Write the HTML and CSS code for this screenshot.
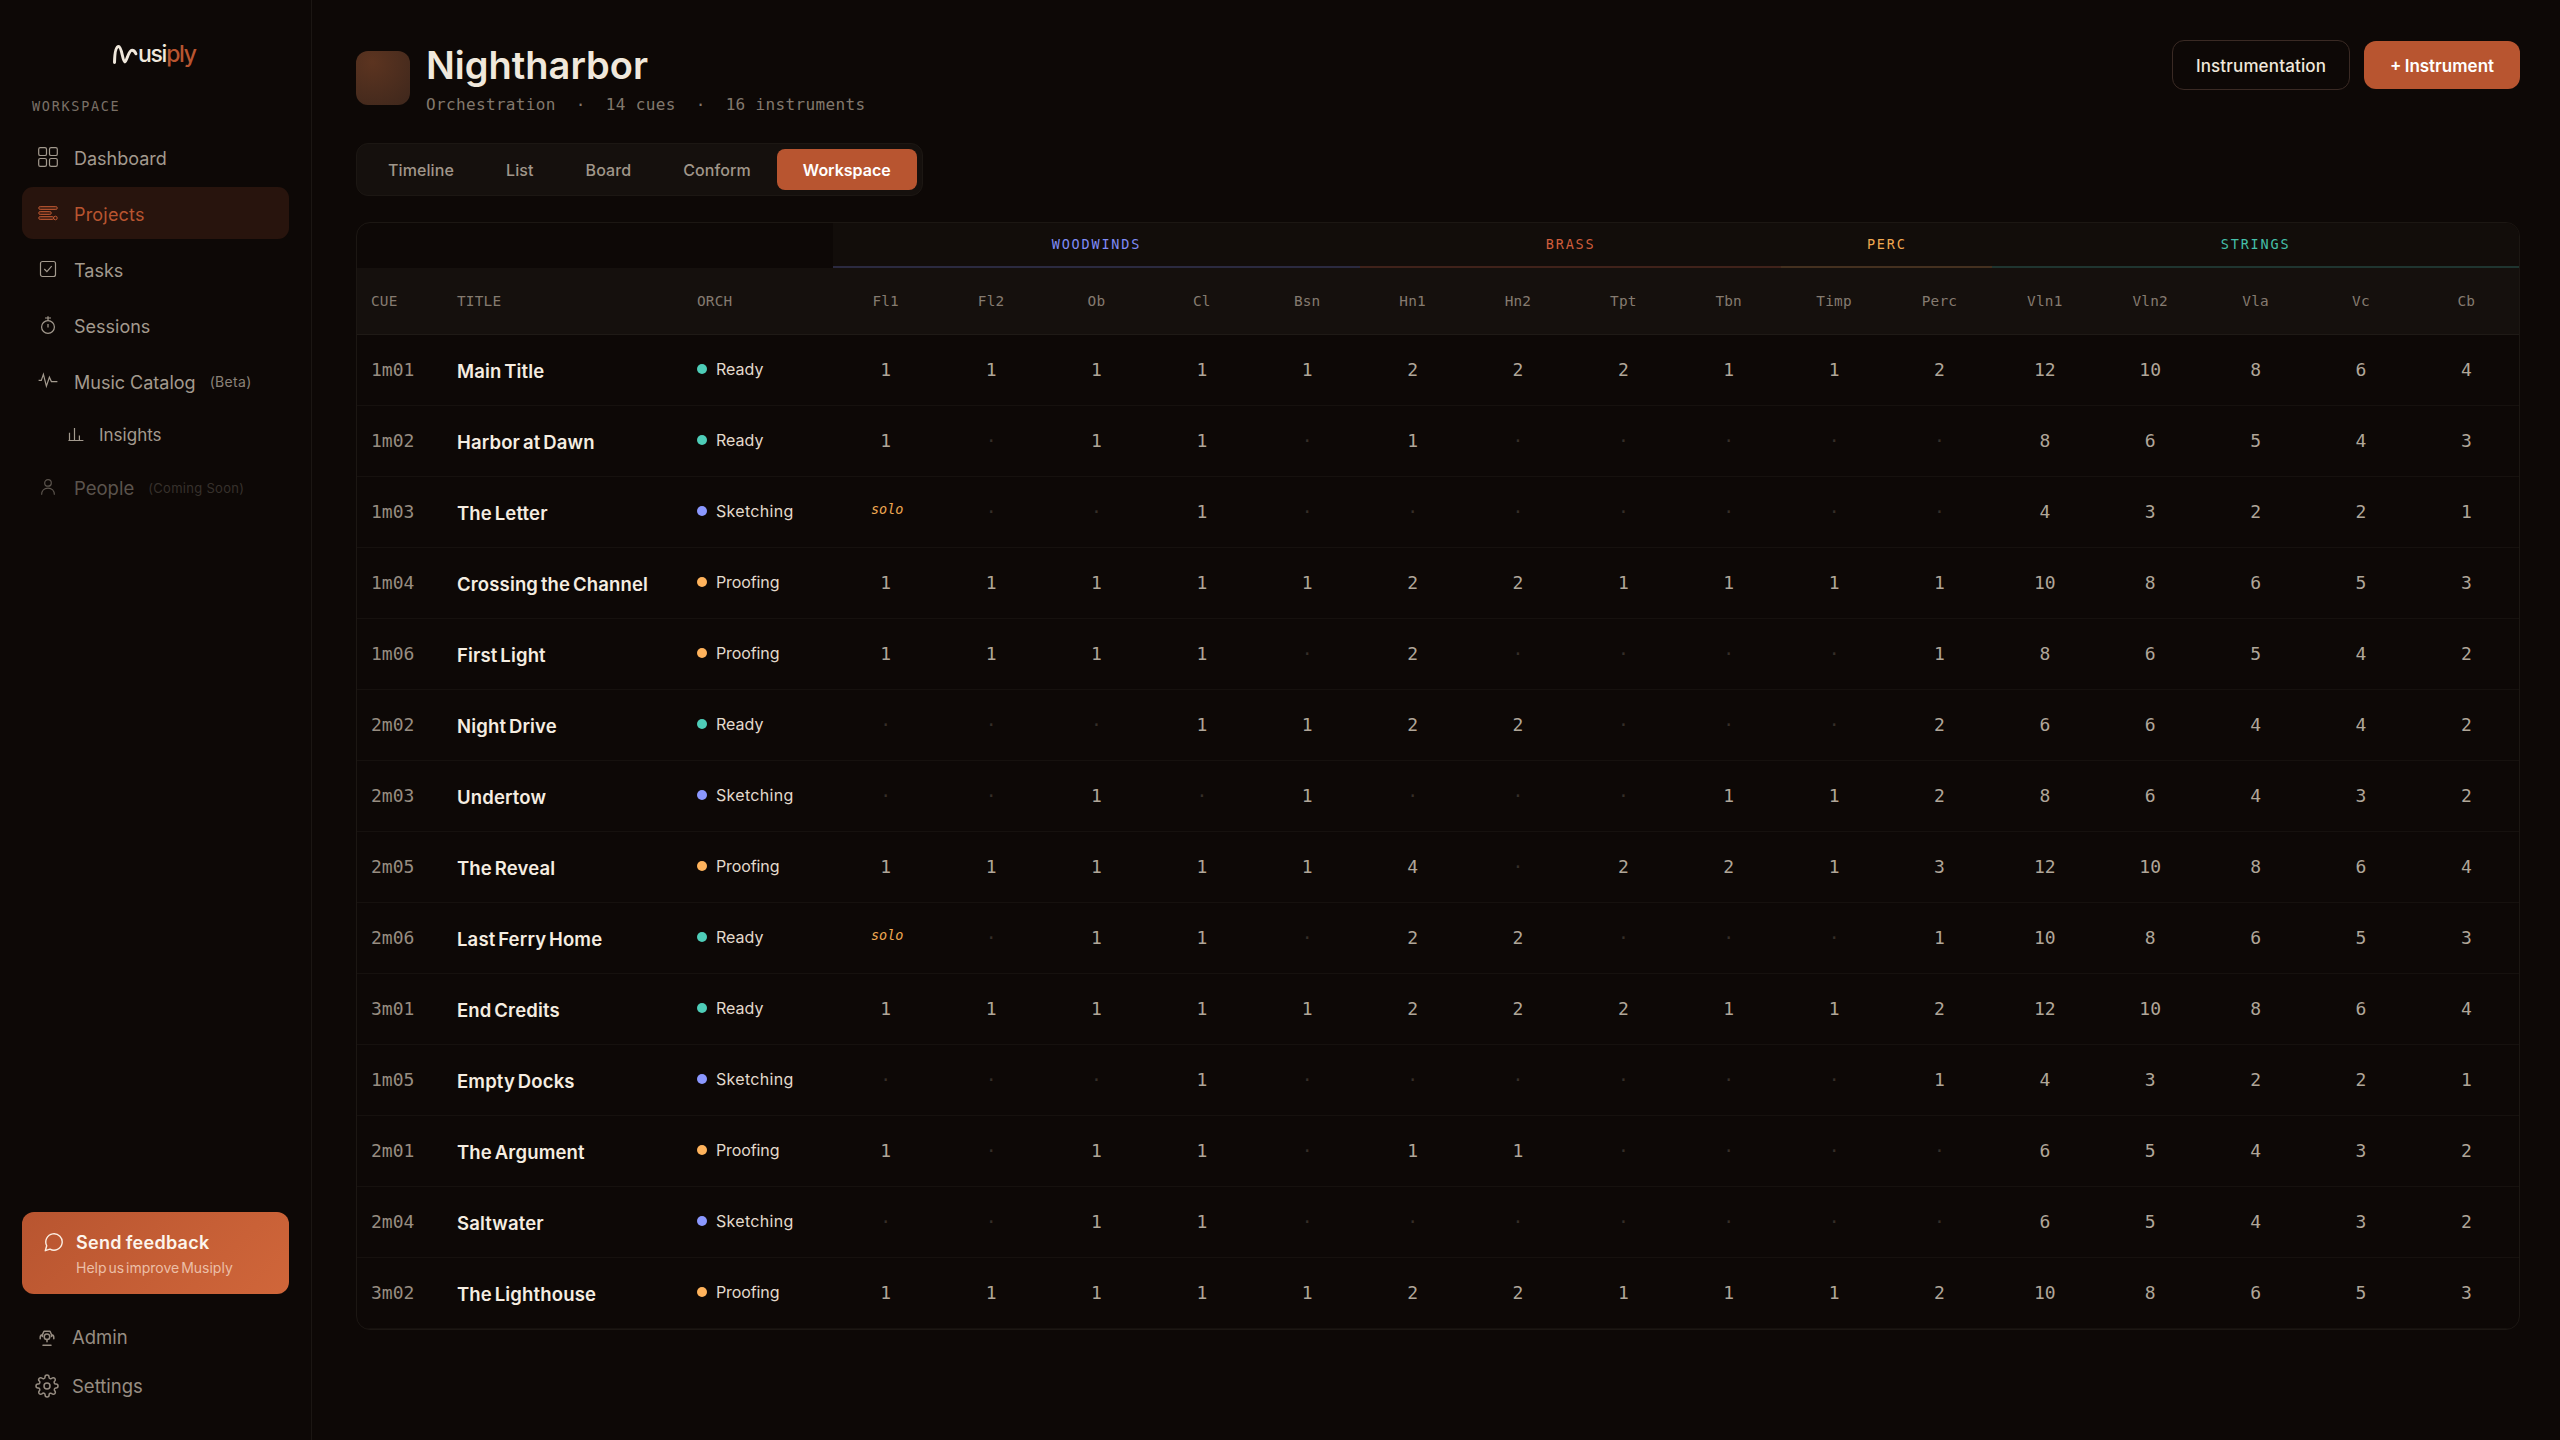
FILE: index.html
```html
<!DOCTYPE html>
<html lang="en">
<head>
    <meta charset="utf-8">
    <title>Nightharbor - Musiply</title>
    <link rel="stylesheet" href="styles.css">
</head>
<body>
    <div class="app">
        <aside class="sidebar">
            <div class="logo">
                <svg class="logo-mark" viewBox="0 0 26 22"><path d="M2.5 19.4C2.7 11 3.6 3.6 6.6 3.6C9.8 3.6 10.6 18.4 12.8 18.9C14.8 18.2 16.6 7.3 20 7.3C22 7.3 23 8.6 23.9 10.8"/></svg>
                <span class="logo-text">usi<em>ply</em></span>
            </div>
            <div class="section-label">WORKSPACE</div>
            <nav class="nav">
                <a class="nav-item">
                    <svg class="icon" viewBox="0 0 20 20"><rect x=".7" y=".7" width="7.8" height="7.8" rx="1.6"/><rect x="11.5" y=".7" width="7.8" height="7.8" rx="1.6"/><rect x=".7" y="11.5" width="7.8" height="7.8" rx="1.6"/><rect x="11.5" y="11.5" width="7.8" height="7.8" rx="1.6"/></svg>
                    <span>Dashboard</span>
                </a>
                <a class="nav-item active">
                    <svg class="icon bars" viewBox="0 0 20 20"><rect x=".7" y="3.5" width="18.6" height="3" rx="1.5"/><rect x=".7" y="8.5" width="12.6" height="3" rx="1.5"/><rect x=".7" y="13.5" width="15" height="3" rx="1.5"/><circle cx="17.4" cy="15" r="1.8"/></svg>
                    <span>Projects</span>
                </a>
                <a class="nav-item">
                    <svg class="icon" viewBox="0 0 20 20"><rect x="2.5" y="2.5" width="15" height="15" rx="2"/><path d="M6.3 10l2.6 2.6 4.8-5.4"/></svg>
                    <span>Tasks</span>
                </a>
                <a class="nav-item">
                    <svg class="icon" viewBox="0 0 20 20"><circle cx="10" cy="12" r="6.4"/><path d="M10 1.2v4.2M7 3h6M10 9v3.6"/></svg>
                    <span>Sessions</span>
                </a>
                <a class="nav-item">
                    <svg class="icon" viewBox="0 0 20 20"><path d="M.6 9.4h2.7L5.4 3.3l3 11.9 3-9L13.4 10.6h6"/></svg>
                    <span>Music Catalog</span>
                    <small class="tag">(Beta)</small>
                </a>
                <a class="nav-item sub">
                    <svg class="icon" viewBox="0 0 16 16"><path d="M.4 13.5h15M1.5 13.5V5.8M6.5 13.5V1M11.4 13.5V8.4"/></svg>
                    <span>Insights</span>
                </a>
                <a class="nav-item disabled">
                    <svg class="icon" viewBox="0 0 20 20"><circle cx="10" cy="4.9" r="3.3"/><path d="M3.6 16.7c0-4 2.6-6.6 6.4-6.6s6.4 2.6 6.4 6.6"/></svg>
                    <span>People</span>
                    <small class="tag">(Coming Soon)</small>
                </a>
            </nav>

            <div class="sidebar-bottom">
                <div class="feedback">
                    <svg class="feedback-icon" viewBox="0 0 20 20"><path d="M1.3 18.7l1.4-4.9A8.2 8.2 0 1 1 6 17.2z"/></svg>
                    <div>
                        <div class="feedback-title">Send feedback</div>
                        <div class="feedback-sub">Help us improve Musiply</div>
                    </div>
                </div>
                <a class="foot-item">
                    <svg class="foot-icon" viewBox="0 0 24 24"><circle cx="12" cy="11.7" r="2.8"/><path d="M5.2 13.8v-1.4c0-1.5.9-2.4 2.2-2.6L9 6.2h6l1.6 3.6c1.3.2 2.2 1.1 2.2 2.6v1.4M7.4 9.8v1.6M16.6 9.8v1.6M12 14.5v2.3M8 20.2h8"/></svg>
                    <span>Admin</span>
                </a>
                <a class="foot-item">
                    <svg class="foot-icon" viewBox="0 0 24 24"><circle cx="12" cy="12" r="3"/><path d="M19.4 15a1.65 1.65 0 0 0 .33 1.82l.06.06a2 2 0 1 1-2.83 2.83l-.06-.06a1.65 1.65 0 0 0-2.8 1.17V21a2 2 0 0 1-4 0v-.18a1.65 1.65 0 0 0-2.9-1.17l-.06.06a2 2 0 1 1-2.83-2.83l.06-.06A1.65 1.65 0 0 0 3.2 14H3a2 2 0 0 1 0-4h.2a1.65 1.65 0 0 0 1.15-2.88l-.06-.06a2 2 0 1 1 2.83-2.83l.06.06A1.65 1.65 0 0 0 10 3.15V3a2 2 0 0 1 4 0v.15a1.65 1.65 0 0 0 2.82 1.14l.06-.06a2 2 0 1 1 2.83 2.83l-.06.06A1.65 1.65 0 0 0 20.8 10H21a2 2 0 0 1 0 4h-.2a1.65 1.65 0 0 0-1.4 1z"/></svg>
                    <span>Settings</span>
                </a>
            </div>
        </aside>

        <main class="main">
            <header class="header">
                <div class="cover"></div>
                <div class="heading">
                    <h1>Nightharbor</h1>
                    <div class="meta"><span>Orchestration</span><span>·</span><span>14 cues</span><span>·</span><span>16 instruments</span></div>
                </div>
                <div class="actions">
                    <button class="btn btn-outline">Instrumentation</button>
                    <button class="btn btn-primary">+ Instrument</button>
                </div>
            </header>

            <div class="tabs">
                <a class="tab">Timeline</a>
                <a class="tab">List</a>
                <a class="tab">Board</a>
                <a class="tab">Conform</a>
                <a class="tab active">Workspace</a>
            </div>

            <div class="grid">
                <table>
                    <colgroup>
                        <col class="col-cue"><col class="col-title"><col class="col-orch"><col span="16">
                    </colgroup>
                    <thead>
                        <tr class="groups">
                            <th colspan="3"></th>
                            <th colspan="5" class="woodwinds">WOODWINDS</th>
                            <th colspan="4" class="brass">BRASS</th>
                            <th colspan="2" class="perc">PERC</th>
                            <th colspan="5" class="strings">STRINGS</th>
                        </tr>
                        <tr class="columns" id="columns">
                            <th class="left">CUE</th>
                            <th class="left">TITLE</th>
                            <th class="left orch">ORCH</th>
                        </tr>
                    </thead>
                    <tbody id="cues"></tbody>
                </table>
            </div>
        </main>
    </div>
    <script src="script.js"></script>
</body>
</html>
```
FILE: styles.css
```css
* {
    box-sizing: border-box;
}

body {
    margin: 0;
    background-color: #0d0806;
    color: #f0e8dc;
    font-family: Inter, "Open Sans", sans-serif;
}

.app {
    display: flex;
    height: 1440px;
}

/* Sidebar */
.sidebar {
    width: 312px;
    padding: 0 22px 30px;
    border-right: 1px solid #1b1613;
    display: flex;
    flex-direction: column;
}

.logo {
    display: flex;
    height: 28px;
    margin: 40px 0 0 90px;
    align-items: center;
}

.logo-mark {
    width: 26px;
    height: 22px;
    fill: none;
    stroke: #f0e8dc;
    stroke-width: 3;
    stroke-linecap: round;
    stroke-linejoin: round;
}

.logo-text {
    font-size: 23px;
    font-weight: 500;
    letter-spacing: -1.3px;
}

.logo-text em {
    font-style: normal;
    color: #b85530;
}

.section-label {
    margin: 28px 0 0 10px;
    height: 20px;
    line-height: 20px;
    font-family: "DejaVu Sans Mono", monospace;
    font-size: 13.5px;
    letter-spacing: 1.7px;
    color: #7a7066;
}

.nav {
    display: flex;
    flex-direction: column;
    gap: 4px;
    margin-top: 15px;
}

.nav-item {
    display: flex;
    align-items: center;
    height: 52px;
    padding-left: 16px;
    border-radius: 11px;
    font-size: 18px;
    color: #a39a8e;
}

.nav-item span {
    padding-top: 2px;
}

.nav-item.active {
    background-color: #28140d;
    letter-spacing: 0.2px;
    color: #b85530;
}

.nav-item.sub {
    height: 48px;
    padding-left: 46px;
    font-size: 17px;
}

.nav-item.sub span {
    padding-top: 0;
}

.nav-item.disabled {
    margin-top: -1px;
    font-size: 18.5px;
    color: #5b544d;
}

.nav-item.disabled span {
    padding-top: 0;
}

.icon {
    width: 20px;
    height: 20px;
    margin-right: 16px;
    fill: none;
    stroke: currentColor;
    stroke-width: 1.2;
}

.sub .icon {
    width: 16px;
    height: 16px;
    margin-right: 15px;
}

.bars rect {
    fill: rgba(184, 85, 48, 0.3);
    stroke-width: 0.9;
}

.bars circle {
    stroke-width: 1;
}

.tag {
    margin-left: 14px;
    font-size: 14px;
    letter-spacing: 0.35px;
    color: #8b8278;
}

.disabled .tag {
    font-size: 13px;
    letter-spacing: 0.3px;
    color: #37312c;
}

.sidebar-bottom {
    margin-top: auto;
}

.feedback {
    display: flex;
    height: 82px;
    margin-bottom: 18px;
    padding: 18px 0 0 22px;
    border-radius: 12px;
    background: linear-gradient(135deg, #b85530, #d0663a);
}

.feedback-icon {
    width: 20px;
    height: 20px;
    margin: 2px 12px 0 0;
    fill: none;
    stroke: #fbeee2;
    stroke-width: 1.4;
    stroke-linejoin: round;
}

.feedback-title {
    font-size: 18px;
    font-weight: 600;
    line-height: 26px;
    letter-spacing: 0.3px;
    word-spacing: -1px;
    color: #fdf5ec;
}

.feedback-sub {
    font-size: 14px;
    line-height: 23px;
    word-spacing: -2px;
    color: #ecbfa7;
}

.foot-item {
    display: flex;
    align-items: center;
    height: 49px;
    padding-left: 13px;
    font-size: 18.5px;
    color: #978d82;
}

.foot-icon {
    width: 24px;
    height: 24px;
    margin-right: 13px;
    fill: none;
    stroke: currentColor;
    stroke-width: 1.5;
    stroke-linecap: round;
    stroke-linejoin: round;
}

/* Project header */
.main {
    flex: 1;
    padding: 40px 40px 0 44px;
}

.header {
    display: flex;
    height: 103px;
}

.cover {
    width: 54px;
    height: 54px;
    margin: 11px 16px 0 0;
    border-radius: 12px;
    background: radial-gradient(circle at 30% 20%, #5c3420, #3e271c);
}

h1 {
    margin: 0;
    height: 50px;
    font-size: 38px;
    font-weight: 600;
    line-height: 50px;
}

.meta {
    display: flex;
    gap: 20px;
    margin-top: 5px;
    font-family: "DejaVu Sans Mono", monospace;
    font-size: 16px;
    line-height: 20px;
    letter-spacing: 0.35px;
    color: #82786d;
}

.actions {
    display: flex;
    gap: 14px;
    margin-left: auto;
}

.btn {
    height: 50px;
    padding: 2px 0 0;
    border-radius: 12px;
    font-family: inherit;
    font-size: 17px;
    font-weight: 500;
}

.btn-outline {
    width: 178px;
    background: none;
    border: 1px solid #3a2a24;
    letter-spacing: 0.15px;
    color: #f0e8dc;
}

.btn-primary {
    width: 156px;
    height: 48px;
    margin-top: 1px;
    background-color: #b85530;
    border: none;
    font-weight: 600;
    word-spacing: -1px;
    color: #fff;
}

.tabs {
    display: inline-flex;
    height: 53px;
    padding: 5px;
    border: 1px solid #1c1713;
    border-radius: 12px;
    background-color: #15100d;
}

.tab {
    padding: 0 26px;
    border-radius: 8px;
    font-size: 16px;
    font-weight: 500;
    line-height: 42px;
    letter-spacing: 0.1px;
    color: #a0968a;
}

.tab.active {
    background-color: #b85530;
    font-weight: 600;
    letter-spacing: 0;
    color: #fff;
}

/* Instrument grid */
.grid {
    margin-top: 26px;
    border: 1px solid #1c1713;
    border-radius: 14px;
    overflow: hidden;
}

table {
    width: 100%;
    table-layout: fixed;
    border-collapse: separate;
    border-spacing: 0;
}

.col-cue {
    width: 86px;
}

.col-title {
    width: 239px;
}

.col-orch {
    width: 151px;
}

th, td {
    padding: 0;
    text-align: center;
    font-family: "DejaVu Sans Mono", monospace;
}

.groups th {
    height: 45px;
    padding-bottom: 1px;
    font-size: 13.5px;
    font-weight: 400;
    letter-spacing: 1.8px;
}

.groups .woodwinds,
.groups .brass,
.groups .perc,
.groups .strings {
    background-color: #120d0a;
    border-bottom: 2px solid;
}

.groups .woodwinds {
    color: #7f8bf5;
    border-color: #2b2a40;
}

.groups .brass {
    color: #d05d3c;
    border-color: #40221a;
}

.groups .perc {
    color: #f0a850;
    border-color: #44301f;
}

.groups .strings {
    color: #45bfa8;
    border-color: #1f3530;
}

.columns th {
    height: 67px;
    background-color: #15100d;
    border-bottom: 1px solid #1f1a16;
    font-size: 14.4px;
    font-weight: 400;
    letter-spacing: 0.2px;
    color: #857b70;
}

th.left, td.left {
    padding-left: 14px;
    text-align: left;
}

.columns th.orch {
    padding-left: 15px;
}

td {
    height: 71px;
    padding-bottom: 2px;
    border-bottom: 1px solid #16110e;
    font-size: 18px;
    color: #b0a699;
}

td.cue {
    color: #978d81;
}

td.title {
    font-family: Inter, sans-serif;
    font-size: 18.5px;
    font-weight: 600;
    letter-spacing: 0.15px;
    word-spacing: -2px;
    padding-top: 1px;
    padding-bottom: 0;
    color: #f5ede1;
}

.status {
    display: flex;
    align-items: center;
    gap: 9px;
    margin-left: 1px;
    font-family: Inter, sans-serif;
    font-size: 16px;
    color: #e3dacd;
}

.status.sketching {
    letter-spacing: 0.3px;
}

.status::before {
    content: "";
    width: 10px;
    height: 10px;
    border-radius: 50%;
    background-color: #4ecdb8;
}

.status.sketching::before {
    background-color: #8b98ff;
}

.status.proofing {
    letter-spacing: -0.1px;
}

.status.proofing::before {
    background-color: #ffb35c;
}

td.empty {
    color: #352e28;
}

td.solo {
    padding: 0 0 6px 3px;
    font-size: 13.5px;
    font-style: italic;
    color: #f0a852;
}
```
FILE: script.js
```js
var instruments = ['Fl1', 'Fl2', 'Ob', 'Cl', 'Bsn', 'Hn1', 'Hn2', 'Tpt', 'Tbn', 'Timp', 'Perc', 'Vln1', 'Vln2', 'Vla', 'Vc', 'Cb'];

// 0 = instrument not used in the cue
var cues = [
    ['1m01', 'Main Title', 'Ready', [1, 1, 1, 1, 1, 2, 2, 2, 1, 1, 2, 12, 10, 8, 6, 4]],
    ['1m02', 'Harbor at Dawn', 'Ready', [1, 0, 1, 1, 0, 1, 0, 0, 0, 0, 0, 8, 6, 5, 4, 3]],
    ['1m03', 'The Letter', 'Sketching', ['solo', 0, 0, 1, 0, 0, 0, 0, 0, 0, 0, 4, 3, 2, 2, 1]],
    ['1m04', 'Crossing the Channel', 'Proofing', [1, 1, 1, 1, 1, 2, 2, 1, 1, 1, 1, 10, 8, 6, 5, 3]],
    ['1m06', 'First Light', 'Proofing', [1, 1, 1, 1, 0, 2, 0, 0, 0, 0, 1, 8, 6, 5, 4, 2]],
    ['2m02', 'Night Drive', 'Ready', [0, 0, 0, 1, 1, 2, 2, 0, 0, 0, 2, 6, 6, 4, 4, 2]],
    ['2m03', 'Undertow', 'Sketching', [0, 0, 1, 0, 1, 0, 0, 0, 1, 1, 2, 8, 6, 4, 3, 2]],
    ['2m05', 'The Reveal', 'Proofing', [1, 1, 1, 1, 1, 4, 0, 2, 2, 1, 3, 12, 10, 8, 6, 4]],
    ['2m06', 'Last Ferry Home', 'Ready', ['solo', 0, 1, 1, 0, 2, 2, 0, 0, 0, 1, 10, 8, 6, 5, 3]],
    ['3m01', 'End Credits', 'Ready', [1, 1, 1, 1, 1, 2, 2, 2, 1, 1, 2, 12, 10, 8, 6, 4]],
    ['1m05', 'Empty Docks', 'Sketching', [0, 0, 0, 1, 0, 0, 0, 0, 0, 0, 1, 4, 3, 2, 2, 1]],
    ['2m01', 'The Argument', 'Proofing', [1, 0, 1, 1, 0, 1, 1, 0, 0, 0, 0, 6, 5, 4, 3, 2]],
    ['2m04', 'Saltwater', 'Sketching', [0, 0, 1, 1, 0, 0, 0, 0, 0, 0, 0, 6, 5, 4, 3, 2]],
    ['3m02', 'The Lighthouse', 'Proofing', [1, 1, 1, 1, 1, 2, 2, 1, 1, 1, 2, 10, 8, 6, 5, 3]]
];

var columns = document.getElementById('columns');
instruments.forEach(function (name) {
    var th = document.createElement('th');
    th.textContent = name;
    columns.appendChild(th);
});

function countCell(value) {
    if (value === 0) return '<td class="empty">·</td>';
    if (value === 'solo') return '<td class="solo">solo</td>';
    return '<td>' + value + '</td>';
}

document.getElementById('cues').innerHTML = cues.map(function (cue) {
    return '<tr>' +
        '<td class="left cue">' + cue[0] + '</td>' +
        '<td class="left title">' + cue[1] + '</td>' +
        '<td class="left"><div class="status ' + cue[2].toLowerCase() + '">' + cue[2] + '</div></td>' +
        cue[3].map(countCell).join('') +
        '</tr>';
}).join('');
```
